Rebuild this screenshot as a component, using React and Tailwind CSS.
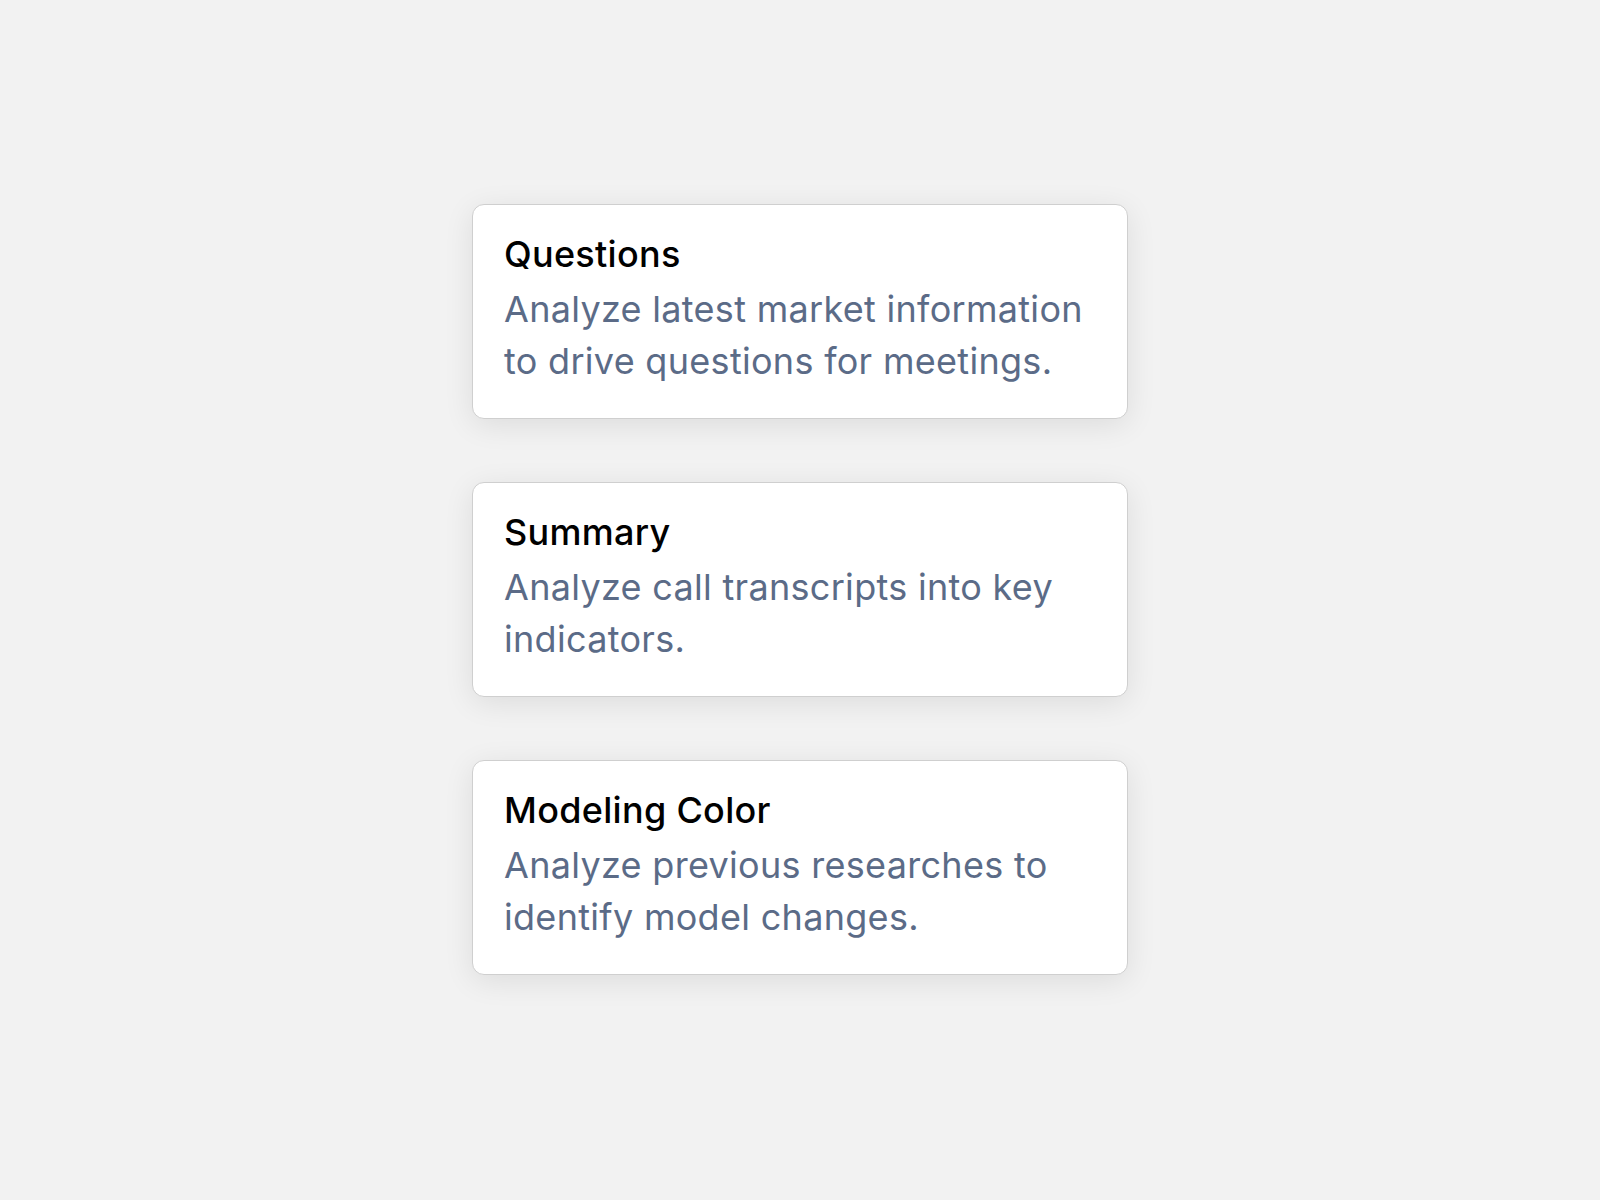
import React from "react";

const cards = [
  { title: "Questions", desc: "Analyze latest market information to drive questions for meetings." },
  { title: "Summary", desc: "Analyze call transcripts into key indicators." },
  { title: "Modeling Color", desc: "Analyze previous researches to identify model changes." },
];

export default function App() {
  return (
    <div className="w-[1600px] h-[1200px] bg-[#f2f2f2] flex flex-col items-center pt-[204px] gap-[63px]" style={{ fontFamily: "Inter, 'Noto Sans', sans-serif" }}>
      {cards.map((c) => (
        <div key={c.title} className="w-[656px] h-[215px] bg-white border border-[#cfcfcf] rounded-[12px] shadow-[0_6px_30px_rgba(0,0,0,0.09)] pl-[31px] pr-[24px] pt-[23px]">
          <div className="text-[36px] leading-[52px] font-medium tracking-[0.3px] text-black">{c.title}</div>
          <div className="text-[36px] leading-[52px] tracking-[0.3px] text-[#5b6b87] mt-[3px]">{c.desc}</div>
        </div>
      ))}
    </div>
  );
}
